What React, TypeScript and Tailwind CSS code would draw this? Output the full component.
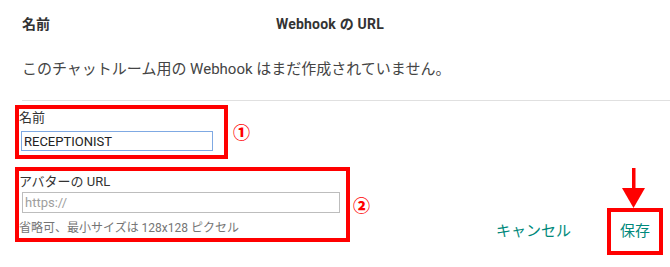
import React from 'react';

const font = "font-['Roboto','Noto_Sans_CJK_JP',sans-serif]";

const App: React.FC = () => {
  return (
    <div className={`relative w-[670px] h-[267px] bg-white overflow-hidden ${font}`}>
      {/* Table header */}
      <div className="flex h-[48px] items-center pl-[22px] text-[14px] font-bold text-[#333]">
        <div className="w-[254px]">名前</div>
        <div className="tracking-[0.2px]">Webhook の URL</div>
      </div>

      <p className="mt-[11px] pl-[22px] text-[15px] leading-[20px] text-[#444]">
        このチャットルーム用の Webhook はまだ作成されていません。
      </p>

      <div className="ml-[22px] mt-[21px] border-t border-[#e0e0e0]"></div>

      {/* Form */}
      <div className="flex">
        <div className="flex flex-col">
          <div className="mt-[4px] flex items-center gap-[5px]">
            <div className="ml-[15px] w-[213px] h-[54px] border-4 border-[#ff0000] pt-[1px]">
              <div className="text-[13px] leading-[16px] text-[#333]">名前</div>
              <input
                type="text"
                defaultValue="RECEPTIONIST"
                className="mt-[5px] ml-[2px] block w-[192px] h-[20px] border border-[#7fa9e3] px-[2px] text-[13px] text-[#222] outline-none"
              />
            </div>
            <span className="font-['Noto_Sans_CJK_JP',sans-serif] text-[17px] leading-[20px] font-black text-[#ff0000]">①</span>
          </div>

          <div className="mt-[8px] flex items-center gap-[3px]">
            <div className="ml-[15px] w-[335px] h-[75px] border-4 border-[#ff0000] pt-[3px]">
              <div className="text-[13px] leading-[16px] text-[#333]">アバターの URL</div>
              <input
                type="text"
                placeholder="https://"
                className="mt-[2px] ml-[3px] block w-[318px] h-[21px] border border-[#bdbdbd] px-[2px] text-[13px] text-[#222] placeholder-[#9e9e9e] outline-none"
              />
              <div className="mt-[7px] text-[12px] leading-[16px] text-[#757575]">
                省略可、最小サイズは 128x128 ピクセル
              </div>
            </div>
            <span className="font-['Noto_Sans_CJK_JP',sans-serif] text-[17px] leading-[20px] font-black text-[#ff0000]">②</span>
          </div>
        </div>

        <div className="flex-1 flex items-center justify-end mt-[107px] h-[47px] pr-[7px]">
          <button className="text-[15px] text-[#00897b]">キャンセル</button>
          <div className="ml-[36px] w-[56px] h-[47px] border-4 border-[#ff0000] flex items-center justify-center">
            <button className="text-[15px] text-[#00897b]">保存</button>
          </div>
        </div>
      </div>

      {/* Annotation arrow */}
      <svg className="absolute left-[622px] top-[168px]" width="23" height="40" viewBox="0 0 23 40">
        <rect x="10" y="0" width="3.5" height="22" fill="#ff0000" />
        <polygon points="0,20 23,20 11.5,40" fill="#ff0000" />
      </svg>
    </div>
  );
};

export default App;
